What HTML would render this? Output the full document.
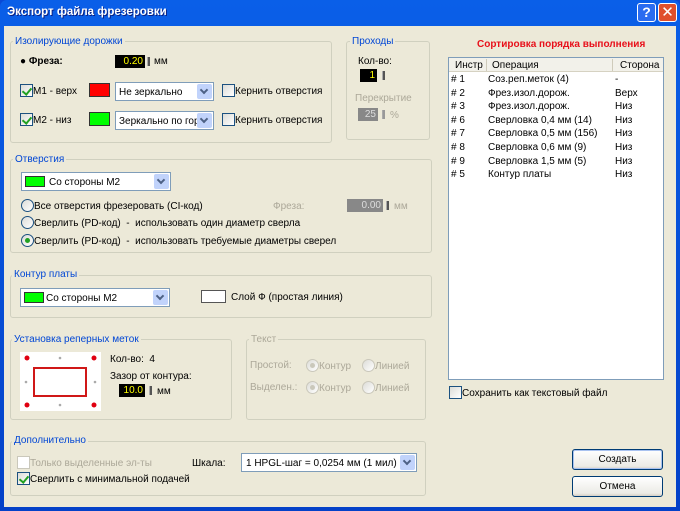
<!DOCTYPE html>
<html><head><meta charset="utf-8"><style>
*{box-sizing:border-box;margin:0;padding:0}
body{width:680px;height:511px;overflow:hidden;background:#0a49d6;font-family:"Liberation Sans","DejaVu Sans",sans-serif;font-size:10px;color:#000}
.win{position:absolute;left:0;top:0;width:680px;height:511px;background:linear-gradient(#0a5fe8,#0441c8);border-radius:7px 7px 0 0}
.client{position:absolute;left:4px;top:26px;width:672px;height:481px;background:#ece9d8}
.t{position:absolute;white-space:nowrap;line-height:13px}
.gb{position:absolute;border:1px solid #d0d0bf;border-radius:3px}
.lg{position:absolute;color:#0046d5;background:#ece9d8;padding:0 2px;line-height:13px;white-space:nowrap}
.dis{color:#aca899}
.cb{position:absolute;width:13px;height:13px;border:1px solid #1c5180;background:linear-gradient(135deg,#dcdcd7,#fff)}
.ck::after{content:"";position:absolute;left:3px;top:1px;width:4px;height:7px;border:solid #21a121;border-width:0 2px 2px 0;transform:rotate(40deg)}
.rb{position:absolute;width:13px;height:13px;border:1px solid #1c5180;border-radius:50%;background:linear-gradient(135deg,#dcdcd7,#fff)}
.rb.on::after{content:"";position:absolute;left:3px;top:3px;width:5px;height:5px;border-radius:50%;background:#21a121}
.rb.d{border-color:#cac8bb}
.rb.d.on::after{background:#cac8bb}
.combo{position:absolute;background:#fff;border:1px solid #7f9db9;height:19px;overflow:hidden}
.combo .a{position:absolute;right:1px;top:1px;width:15px;height:15px;background:#c1d3fb;border-radius:2px}
.combo .a::after{content:"";position:absolute;left:4px;top:3px;width:4px;height:4px;border:solid #4d6185;border-width:0 2px 2px 0;transform:rotate(45deg)}
.sw{position:absolute;border:1px solid #333}
.num{position:absolute;background:#000;color:#ff0;text-align:right;padding-right:2px;line-height:13px;height:13px}
.spin{position:absolute;width:3px;height:9px;background:#555;border-left:1px solid #aaa}
.btn{position:absolute;border:1px solid #003c74;border-radius:3px;background:linear-gradient(#fff,#ecebe6 85%,#d6d0c5);text-align:center;line-height:19px}
</style></head><body>
<div class="win">
<div class="t" style="left:7px;top:6px;color:#fff;font-weight:bold;font-size:11.5px;text-shadow:1px 1px #0a1f80">Экспорт файла фрезеровки</div>
<div style="position:absolute;left:637px;top:3px;width:19px;height:19px;border:1px solid #fff;border-radius:3px;background:#2a6cf0;color:#fff;font-weight:bold;font-size:14px;text-align:center;line-height:17px">?</div>
<div style="position:absolute;left:658px;top:3px;width:19px;height:19px;border:1px solid #fff;border-radius:3px;background:#e0502c;color:#fff;font-weight:bold;font-size:15px;text-align:center;line-height:17px">✕</div>
</div>
<div class="client"></div>

<!-- Изолирующие дорожки -->
<div class="gb" style="left:10px;top:41px;width:322px;height:102px"></div>
<div class="lg" style="left:13px;top:35px">Изолирующие дорожки</div>
<div class="t" style="left:20px;top:55px;font-weight:bold">● Фреза:</div>
<div class="num" style="left:115px;top:55px;width:30px">0.20</div><div class="spin" style="left:147px;top:57px"></div>
<div class="t" style="left:154px;top:55px">мм</div>
<div class="cb ck" style="left:20px;top:84px"></div><div class="t" style="left:33px;top:85px">M1 - верх</div>
<div class="sw" style="left:89px;top:83px;width:21px;height:14px;background:#f00"></div>
<div class="combo" style="left:115px;top:82px;width:99px"><div class="t" style="left:3px;top:3px">Не зеркально</div><div class="a"></div></div>
<div class="cb" style="left:222px;top:84px"></div><div class="t" style="left:235px;top:85px">Кернить отверстия</div>
<div class="cb ck" style="left:20px;top:113px"></div><div class="t" style="left:33px;top:114px">M2 - низ</div>
<div class="sw" style="left:89px;top:112px;width:21px;height:14px;background:#0f0"></div>
<div class="combo" style="left:115px;top:111px;width:99px"><div class="t" style="left:3px;top:3px">Зеркально по гори</div><div class="a"></div></div>
<div class="cb" style="left:222px;top:113px"></div><div class="t" style="left:235px;top:114px">Кернить отверстия</div>

<!-- Проходы -->
<div class="gb" style="left:346px;top:41px;width:84px;height:99px"></div>
<div class="lg" style="left:350px;top:35px">Проходы</div>
<div class="t" style="left:358px;top:55px">Кол-во:</div>
<div class="num" style="left:360px;top:69px;width:17px">1</div><div class="spin" style="left:382px;top:71px"></div>
<div class="t dis" style="left:355px;top:92px">Перекрытие</div>
<div class="num" style="left:358px;top:108px;width:20px;background:#888;color:#ddd">25</div><div class="spin" style="left:382px;top:110px;background:#999"></div>
<div class="t dis" style="left:390px;top:109px">%</div>

<!-- Sort list -->
<div class="t" style="left:477px;top:38px;color:#e8101a;font-weight:bold">Сортировка порядка выполнения</div>
<div style="position:absolute;left:448px;top:57px;width:216px;height:323px;background:#fff;border:1px solid #7f9db9"></div>
<div style="position:absolute;left:449px;top:58px;width:214px;height:14px;background:#f2f1ea;border-bottom:1px solid #d6d2c2"></div>
<div style="position:absolute;left:486px;top:59px;width:1px;height:12px;background:#cfcbbb"></div>
<div style="position:absolute;left:612px;top:59px;width:1px;height:12px;background:#cfcbbb"></div>
<div class="t" style="left:455px;top:59px">Инстр</div><div class="t" style="left:492px;top:59px">Операция</div><div class="t" style="left:620px;top:59px">Сторона</div>
<div class="t" style="left:451px;top:73px;line-height:13.6px">#&nbsp;1<br>#&nbsp;2<br>#&nbsp;3<br>#&nbsp;6<br>#&nbsp;7<br>#&nbsp;8<br>#&nbsp;9<br>#&nbsp;5</div>
<div class="t" style="left:488px;top:73px;line-height:13.6px">Соз.реп.меток (4)<br>Фрез.изол.дорож.<br>Фрез.изол.дорож.<br>Сверловка 0,4 мм (14)<br>Сверловка 0,5 мм (156)<br>Сверловка 0,6 мм (9)<br>Сверловка 1,5 мм (5)<br>Контур платы</div>
<div class="t" style="left:615px;top:73px;line-height:13.6px">-<br>Верх<br>Низ<br>Низ<br>Низ<br>Низ<br>Низ<br>Низ</div>

<!-- Отверстия -->
<div class="gb" style="left:10px;top:159px;width:422px;height:94px"></div>
<div class="lg" style="left:13px;top:153px">Отверстия</div>
<div class="combo" style="left:21px;top:172px;width:150px"><div class="sw" style="left:3px;top:3px;width:20px;height:11px;background:#0f0"></div><div class="t" style="left:27px;top:3px">Со стороны M2</div><div class="a"></div></div>
<div class="rb" style="left:21px;top:199px"></div><div class="t" style="left:34px;top:200px">Все отверстия фрезеровать (CI-код)</div>
<div class="t dis" style="left:273px;top:200px">Фреза:</div>
<div class="num" style="left:347px;top:199px;width:36px;background:#888;color:#ddd">0.00</div><div class="spin" style="left:386px;top:201px"></div>
<div class="t dis" style="left:394px;top:200px">мм</div>
<div class="rb" style="left:21px;top:216px"></div><div class="t" style="left:34px;top:217px">Сверлить (PD-код)&nbsp; -&nbsp; использовать один диаметр сверла</div>
<div class="rb on" style="left:21px;top:234px"></div><div class="t" style="left:34px;top:235px">Сверлить (PD-код)&nbsp; -&nbsp; использовать требуемые диаметры сверел</div>

<!-- Контур платы -->
<div class="gb" style="left:10px;top:275px;width:422px;height:43px"></div>
<div class="lg" style="left:12px;top:268px">Контур платы</div>
<div class="combo" style="left:20px;top:288px;width:150px"><div class="sw" style="left:3px;top:3px;width:20px;height:11px;background:#0f0"></div><div class="t" style="left:25px;top:3px">Со стороны M2</div><div class="a"></div></div>
<div class="sw" style="left:201px;top:290px;width:25px;height:13px;background:#fff;border-color:#555"></div>
<div class="t" style="left:231px;top:291px">Слой Ф (простая линия)</div>

<!-- Реперные -->
<div class="gb" style="left:10px;top:339px;width:222px;height:81px"></div>
<div class="lg" style="left:12px;top:333px">Установка реперных меток</div>
<div style="position:absolute;left:20px;top:352px;width:81px;height:59px;background:#fff"></div>
<div style="position:absolute;left:33px;top:367px;width:54px;height:30px;border:2px solid #d01818"></div>
<svg style="position:absolute;left:20px;top:352px" width="81" height="59">
<g fill="#e00010"><circle cx="7" cy="6" r="2.5"/><circle cx="74" cy="6" r="2.5"/><circle cx="7" cy="53" r="2.5"/><circle cx="74" cy="53" r="2.5"/></g>
<g fill="#aaa"><circle cx="40" cy="6" r="1.3"/><circle cx="40" cy="53" r="1.3"/><circle cx="6" cy="30" r="1.3"/><circle cx="75" cy="30" r="1.3"/></g></svg>
<div class="t" style="left:110px;top:353px">Кол-во:&nbsp; 4</div>
<div class="t" style="left:110px;top:370px">Зазор от контура:</div>
<div class="num" style="left:119px;top:384px;width:26px">10.0</div><div class="spin" style="left:149px;top:386px"></div>
<div class="t" style="left:157px;top:385px">мм</div>

<!-- Текст -->
<div class="gb" style="left:246px;top:339px;width:180px;height:81px"></div>
<div class="lg dis" style="left:249px;top:333px">Текст</div>
<div class="t dis" style="left:250px;top:359px">Простой:</div>
<div class="rb d on" style="left:306px;top:359px"></div><div class="t dis" style="left:319px;top:360px">Контур</div>
<div class="rb d" style="left:362px;top:359px"></div><div class="t dis" style="left:375px;top:360px">Линией</div>
<div class="t dis" style="left:250px;top:381px">Выделен.:</div>
<div class="rb d on" style="left:306px;top:381px"></div><div class="t dis" style="left:319px;top:382px">Контур</div>
<div class="rb d" style="left:362px;top:381px"></div><div class="t dis" style="left:375px;top:382px">Линией</div>

<!-- Дополнительно -->
<div class="gb" style="left:10px;top:441px;width:416px;height:55px"></div>
<div class="lg" style="left:12px;top:434px">Дополнительно</div>
<div class="cb" style="left:17px;top:456px;border-color:#cac8bb;background:#fff"></div><div class="t dis" style="left:30px;top:457px">Только выделенные эл-ты</div>
<div class="t" style="left:192px;top:457px">Шкала:</div>
<div class="combo" style="left:241px;top:453px;width:176px"><div class="t" style="left:4px;top:3px">1 HPGL-шаг = 0,0254 мм (1 мил)</div><div class="a"></div></div>
<div class="cb ck" style="left:17px;top:472px"></div><div class="t" style="left:30px;top:473px">Сверлить с минимальной подачей</div>

<div class="cb" style="left:449px;top:386px"></div><div class="t" style="left:462px;top:387px">Сохранить как текстовый файл</div>
<div class="btn" style="left:572px;top:449px;width:91px;height:21px;box-shadow:inset 0 0 0 1px #a9c2f0">Создать</div>
<div class="btn" style="left:572px;top:476px;width:91px;height:21px">Отмена</div>
</body></html>
